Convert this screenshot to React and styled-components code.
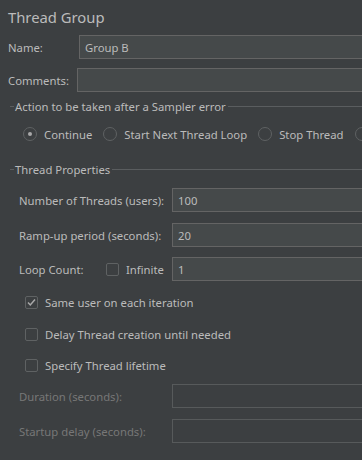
import React from "react";
import styled, { createGlobalStyle } from "styled-components";

const Global = createGlobalStyle`
  html, body { margin: 0; padding: 0; background: #3c3f41; overflow: hidden; }
  body { width: 362px; height: 460px; }
  * { box-sizing: border-box; }
`;

const Page = styled.div`
  width: 362px;
  height: 460px;
  overflow: hidden;
  background: #3c3f41;
  color: #bbbbbb;
  font-family: "Noto Sans", "Open Sans", sans-serif;
  font-size: 11.3px;
  padding: 7px 0 0 8px;
`;

const Inner = styled.div`
  width: 440px;
`;

const Title = styled.div`
  font-size: 14.8px;
  line-height: 20px;
  height: 20px;
  color: #bbbbbb;
`;

const TopRow = styled.div`
  display: flex;
  align-items: center;
  margin-top: ${(p) => p.$mt}px;
  height: 24px;
`;

const Label = styled.div`
  width: ${(p) => p.$w}px;
  flex: none;
  white-space: nowrap;
  color: ${(p) => (p.$disabled ? "#777777" : "#bbbbbb")};
`;

const Field = styled.div`
  flex: 1;
  height: 24px;
  display: flex;
  align-items: center;
  padding-left: 5px;
  background: ${(p) => (p.$disabled ? "#3c3f41" : "#45494a")};
  border: 1px solid ${(p) => (p.$disabled ? "#575a5b" : "#646464")};
  color: #bbbbbb;
`;

const GroupHeader = styled.div`
  display: flex;
  align-items: center;
  margin-top: ${(p) => p.$mt}px;
  margin-left: 2px;
  height: 16px;
  &::before {
    content: "";
    width: 4px;
    height: 1px;
    background: #5a5d5f;
    margin-right: 1px;
  }
  &::after {
    content: "";
    flex: 1;
    height: 1px;
    background: #5a5d5f;
    margin-left: 2px;
  }
`;

const RadioRow = styled.div`
  display: flex;
  align-items: center;
  white-space: nowrap;
  margin-top: 12px;
  margin-left: 15px;
  height: 16px;
`;

const RadioItem = styled.label`
  display: flex;
  align-items: center;
  margin-right: ${(p) => p.$mr}px;
`;

const Radio = styled.span`
  width: 14px;
  height: 14px;
  border-radius: 50%;
  border: 1px solid #5f6263;
  background: #3c3f41;
  margin-right: 7px;
  flex: none;
  display: flex;
  align-items: center;
  justify-content: center;
  &::after {
    content: "";
    display: ${(p) => (p.$on ? "block" : "none")};
    width: 4px;
    height: 4px;
    border-radius: 50%;
    background: #a9a9a9;
  }
`;

const Section = styled.div`
  padding-left: 11px;
`;

const PropRow = styled.div`
  display: flex;
  align-items: center;
  height: 24px;
  margin-top: ${(p) => p.$mt}px;
`;

const Check = styled.span`
  width: 13px;
  height: 13px;
  border: 1px solid #5f6263;
  border-radius: 2px;
  flex: none;
  display: flex;
  align-items: center;
  justify-content: center;
  margin-right: ${(p) => p.$mr}px;
`;

const CheckRow = styled.div`
  display: flex;
  align-items: center;
  height: 16px;
  margin-top: ${(p) => p.$mt}px;
  margin-left: 6px;
`;

const InlineCheck = styled.div`
  display: flex;
  align-items: center;
  width: 66px;
  flex: none;
`;

function Tick() {
  return (
    <svg width="11" height="11" viewBox="0 0 11 11">
      <path d="M2 5.6 L4.3 8 L9 2.5" fill="none" stroke="#a9a9a9" strokeWidth="1.5" />
    </svg>
  );
}

export default function App() {
  return (
    <>
      <Global />
      <Page>
        <Inner>
          <Title>Thread Group</Title>
          <TopRow $mt={8}>
            <Label $w={71}>Name:</Label>
            <Field>Group B</Field>
          </TopRow>
          <TopRow $mt={9}>
            <Label $w={69}>Comments:</Label>
            <Field />
          </TopRow>

          <GroupHeader $mt={6}>Action to be taken after a Sampler error</GroupHeader>
          <RadioRow>
            <RadioItem $mr={11}>
              <Radio $on />
              Continue
            </RadioItem>
            <RadioItem $mr={11}>
              <Radio />
              Start Next Thread Loop
            </RadioItem>
            <RadioItem $mr={11}>
              <Radio />
              Stop Thread
            </RadioItem>
            <RadioItem $mr={11}>
              <Radio />
              Stop Test
            </RadioItem>
          </RadioRow>

          <GroupHeader $mt={19}>Thread Properties</GroupHeader>
          <Section>
            <PropRow $mt={11}>
              <Label $w={153}>Number of Threads (users):</Label>
              <Field>100</Field>
            </PropRow>
            <PropRow $mt={11}>
              <Label $w={153}>Ramp-up period (seconds):</Label>
              <Field>20</Field>
            </PropRow>
            <PropRow $mt={10}>
              <Label $w={87}>Loop Count:</Label>
              <InlineCheck>
                <Check $mr={7} />
                Infinite
              </InlineCheck>
              <Field>1</Field>
            </PropRow>
            <CheckRow $mt={13}>
              <Check $mr={7}>
                <Tick />
              </Check>
              Same user on each iteration
            </CheckRow>
            <CheckRow $mt={16}>
              <Check $mr={7} />
              Delay Thread creation until needed
            </CheckRow>
            <CheckRow $mt={15}>
              <Check $mr={7} />
              Specify Thread lifetime
            </CheckRow>
            <PropRow $mt={11}>
              <Label $w={153} $disabled>Duration (seconds):</Label>
              <Field $disabled />
            </PropRow>
            <PropRow $mt={11}>
              <Label $w={153} $disabled>Startup delay (seconds):</Label>
              <Field $disabled />
            </PropRow>
          </Section>
        </Inner>
      </Page>
    </>
  );
}
